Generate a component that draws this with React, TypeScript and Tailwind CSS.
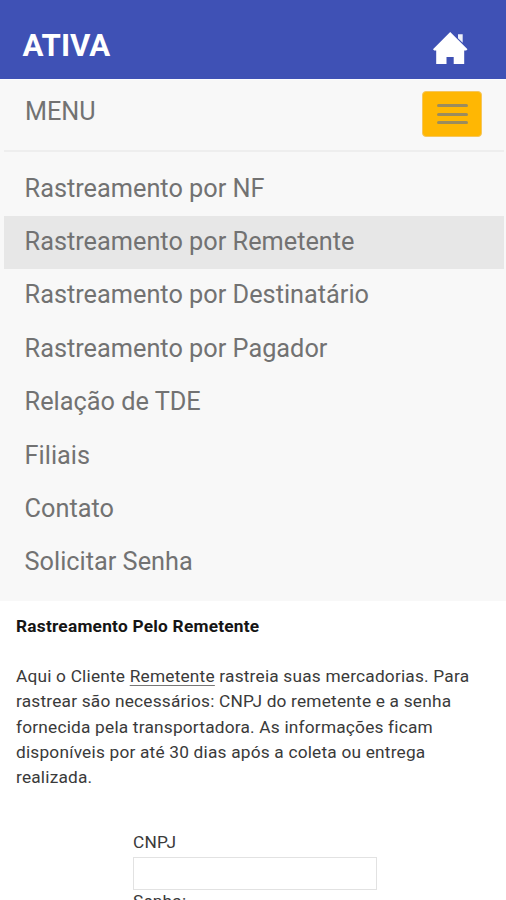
import React from 'react';

const items = [
  { label: 'Rastreamento por NF' },
  { label: 'Rastreamento por Remetente', active: true },
  { label: 'Rastreamento por Destinatário' },
  { label: 'Rastreamento por Pagador' },
  { label: 'Relação de TDE' },
  { label: 'Filiais' },
  { label: 'Contato' },
  { label: 'Solicitar Senha' },
];

export default function App() {
  return (
    <div className="flex h-[900px] w-[506px] flex-col overflow-hidden bg-white font-['Roboto',sans-serif]">
      <header className="flex h-[79px] shrink-0 items-center justify-between bg-[#3f51b5] pl-[22.5px] pr-[38px] pt-[13px]">
        <h1 className="text-[31.2px] leading-9 font-bold text-white">ATIVA</h1>
        <svg className="mt-1 h-[32px] w-[35px]" viewBox="0 0 35 32" fill="#fff">
          <path d="M17.2 0 0 17.2l1.2 1.3h2V32h10.3v-7h7.2v7h10.5V18.5h2l1.3-1.3z" />
          <path d="M25 2.2h4.7v8.6L25 6.2z" opacity=".9" />
        </svg>
      </header>
      <nav className="h-[522px] shrink-0 border-t border-[#fcfcff] bg-[#f8f8f8] text-[#727272]">
        <div className="ml-1 mr-[2px] flex h-[72px] items-start justify-between border-b-2 border-[#eeeeee] pl-[21px] pr-[22px] pt-[11px]">
          <span className="pt-[5px] text-[25.2px] leading-8">MENU</span>
          <button className="flex h-[46px] w-[60px] flex-col items-center justify-center gap-[5.5px] rounded-[4px] border border-[#f6c65c] bg-[#ffb703]">
            <i className="h-[3px] w-[31px] rounded-full bg-[#9b8c5e]" />
            <i className="h-[3px] w-[31px] rounded-full bg-[#9b8c5e]" />
            <i className="h-[3px] w-[31px] rounded-full bg-[#9b8c5e]" />
          </button>
        </div>
        <ul className="ml-1 mr-[2px] pt-[10.4px]">
          {items.map((i) => (
            <li key={i.label} className={`flex h-[53.4px] items-center pb-[1px] pl-[20.6px] text-[25.3px] whitespace-nowrap ${i.active ? 'bg-[#e7e7e7]' : ''}`}>
              {i.label}
            </li>
          ))}
        </ul>
      </nav>
      <main className="px-4 pt-[12.5px] text-[17.3px] leading-[25.2px] tracking-[0.2px] text-[#3a3a3a]">
        <h2 className="font-bold tracking-[0.23px] text-[#151515]">Rastreamento Pelo Remetente</h2>
        <p className="mt-[25.5px]">
          Aqui o Cliente <span className="underline decoration-[#777] underline-offset-[3px]">Remetente</span> rastreia suas mercadorias. Para<br />
          rastrear são necessários: CNPJ do remetente e a senha<br />
          fornecida pela transportadora. As informações ficam<br />
          disponíveis por até 30 dias após a coleta ou entrega<br />
          realizada.
        </p>
        <form className="ml-[117px] mt-[40px]">
          <label className="block">CNPJ</label>
          <input className="mt-[2px] block h-[33px] w-[244px] border border-[#e2e2e2]" />
          <label className="-mt-px block">Senha:</label>
        </form>
      </main>
    </div>
  );
}
